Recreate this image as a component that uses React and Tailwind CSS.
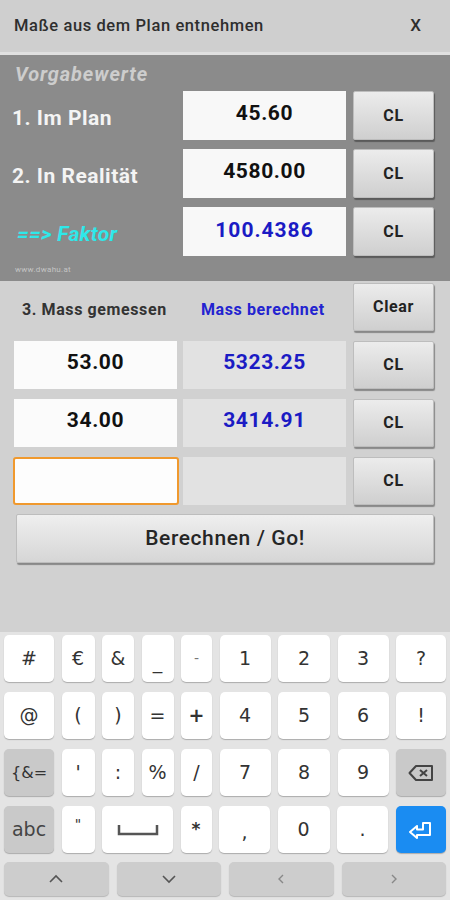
import React from "react";

const F = { fontFamily: "Roboto, 'Liberation Sans', sans-serif" };

function CLButton({ children = "CL", className = "" }) {
  return (
    <button
      className={
        "h-full w-[81px] rounded-[2px] bg-gradient-to-b from-[#ececec] to-[#cfcfcf] text-[16px] tracking-[0.6px] font-bold text-[#222] shadow-[1px_2px_1px_rgba(0,0,0,0.35)] border border-[#bdbdbd] " +
        className
      }
    >
      {children}
    </button>
  );
}

function Key({ children, className = "", dark = false }) {
  return (
    <div
      className={
        "flex items-center justify-center rounded-[5px] shadow-[0_1px_1px_rgba(0,0,0,0.25)] text-[19px] text-[#333] " +
        (dark ? "bg-[#c9c9c9] " : "bg-white ") +
        className
      }
      style={{ fontFamily: "'DejaVu Sans', Roboto, sans-serif" }}
    >
      {children}
    </div>
  );
}

export default function App() {
  return (
    <div className="w-[450px] h-[900px] overflow-hidden bg-[#d1d1d1] flex flex-col" style={F}>
      {/* Header */}
      <div className="h-[52px] bg-[#cfcfcf] flex items-center justify-between pl-[14px] pr-[29px]">
        <span className="text-[16.5px] font-medium text-[#2e2e2e] tracking-[0.6px]">Maße aus dem Plan entnehmen</span>
        <span className="text-[17px] font-medium text-[#2e2e2e]">X</span>
      </div>
      <div className="h-[3px] bg-[#e0e0e0]" />

      {/* Vorgabewerte panel */}
      <div className="h-[226px] bg-[#8b8b8b] flex flex-col pt-[4px] pr-[16px]">
        <div className="h-[30px] flex items-center pl-[15px] text-[20px] tracking-[0.9px] font-bold italic text-[#cdcdcd]">
          Vorgabewerte
        </div>
        <div className="mt-[2px] flex flex-col gap-[9px]">
          <div className="flex h-[49px] items-center">
            <div className="w-[183px] pl-[12px] pt-[7px] text-[21px] tracking-[0.5px] font-bold text-[#f4f4f4]">1. Im Plan</div>
            <div className="h-full w-[163px] bg-[#f8f8f8] flex items-center justify-center pb-[4px] text-[21px] tracking-[0.6px] font-bold text-[#111]">45.60</div>
            <div className="h-full ml-[7px]"><CLButton /></div>
          </div>
          <div className="flex h-[49px] items-center">
            <div className="w-[183px] pl-[12px] pt-[7px] text-[21px] tracking-[0.5px] font-bold text-[#f4f4f4]">2. In Realität</div>
            <div className="h-full w-[163px] bg-[#f8f8f8] flex items-center justify-center pb-[4px] text-[21px] tracking-[0.6px] font-bold text-[#111]">4580.00</div>
            <div className="h-full ml-[7px]"><CLButton /></div>
          </div>
          <div className="flex h-[49px] items-center">
            <div className="w-[183px] pl-[17px] pt-[7px] text-[21px] tracking-[0.3px] font-bold italic text-[#2ee8ea]">==&gt; Faktor</div>
            <div className="h-full w-[163px] bg-[#f8f8f8] flex items-center justify-center pb-[2px] text-[21px] tracking-[1px] font-bold text-[#1b1bc4]">100.4386</div>
            <div className="h-full ml-[7px]"><CLButton /></div>
          </div>
        </div>
        <div className="mt-[10px] pl-[15px] text-[8px] tracking-[0.3px] text-[#c4c4c4] leading-none">www.dwahu.at</div>
      </div>

      {/* Messung */}
      <div className="h-[351px] bg-[#d1d1d1] flex flex-col pt-[2px] pl-[14px] pr-[16px]">
        <div className="flex h-[48px] items-center">
          <div className="w-[169px] pl-[8px] pt-[6px] text-[16px] tracking-[0.6px] font-bold text-[#333]">3. Mass gemessen</div>
          <div className="w-[163px] pl-[18px] pt-[6px] text-[16px] tracking-[0.6px] font-bold text-[#2323d0]">Mass berechnet</div>
          <div className="h-full ml-[7px]"><CLButton>Clear</CLButton></div>
        </div>
        <div className="mt-[10px] flex flex-col gap-[10px]">
          <div className="flex h-[48px]">
            <div className="w-[163px] bg-[#fbfbfb] flex items-center justify-center pb-[4px] text-[21px] tracking-[0.6px] font-bold text-[#111]">53.00</div>
            <div className="ml-[6px] w-[163px] bg-[#e2e2e2] flex items-center justify-center pb-[4px] text-[21px] tracking-[0.6px] font-bold text-[#1b1bc4]">5323.25</div>
            <div className="h-full ml-[7px]"><CLButton /></div>
          </div>
          <div className="flex h-[48px]">
            <div className="w-[163px] bg-[#fbfbfb] flex items-center justify-center pb-[4px] text-[21px] tracking-[0.6px] font-bold text-[#111]">34.00</div>
            <div className="ml-[6px] w-[163px] bg-[#e2e2e2] flex items-center justify-center pb-[4px] text-[21px] tracking-[0.6px] font-bold text-[#1b1bc4]">3414.91</div>
            <div className="h-full ml-[7px]"><CLButton /></div>
          </div>
          <div className="flex h-[48px]">
            <div className="w-[166px] -ml-[1px] rounded-[3px] border-2 border-[#f0992e] bg-[#fdfdfd]" />
            <div className="ml-[4px] w-[163px] bg-[#e2e2e2]" />
            <div className="h-full ml-[7px]"><CLButton /></div>
          </div>
        </div>
        <button className="mt-[9px] ml-[2px] h-[49px] w-[418px] rounded-[2px] border border-[#bdbdbd] bg-gradient-to-b from-[#efefef] to-[#d6d6d6] shadow-[1px_2px_1px_rgba(0,0,0,0.35)] text-[21px] tracking-[0.6px] font-medium text-[#262626]">
          Berechnen / Go!
        </button>
      </div>

      {/* Keyboard */}
      <div className="flex-1 bg-[#e4e4e4] pt-[3px] px-[4px] flex flex-col gap-[10px]">
        <div className="grid h-[47px] grid-cols-[50px_33px_32px_32px_31px_51px_52px_51px_50px] gap-x-[7.5px]">
          <Key>#</Key>
          <Key>€</Key>
          <Key>&amp;</Key>
          <Key><span className="mt-[8px]">_</span></Key>
          <Key><span className="text-[14px] text-[#777]">-</span></Key>
          <Key>1</Key>
          <Key>2</Key>
          <Key>3</Key>
          <Key>?</Key>
        </div>
        <div className="grid h-[47px] grid-cols-[50px_33px_32px_32px_31px_51px_52px_51px_50px] gap-x-[7.5px]">
          <Key>@</Key>
          <Key>(</Key>
          <Key>)</Key>
          <Key>=</Key>
          <Key><span className="font-bold">+</span></Key>
          <Key>4</Key>
          <Key>5</Key>
          <Key>6</Key>
          <Key>!</Key>
        </div>
        <div className="grid h-[47px] grid-cols-[50px_33px_32px_32px_31px_51px_52px_51px_50px] gap-x-[7.5px]">
          <Key dark><span className="text-[16px]">{"{&="}</span></Key>
          <Key>'</Key>
          <Key>:</Key>
          <Key>%</Key>
          <Key>/</Key>
          <Key>7</Key>
          <Key>8</Key>
          <Key>9</Key>
          <Key dark>
            <svg width="26" height="18" viewBox="0 0 26 18" fill="none" stroke="#444" strokeWidth="2" strokeLinejoin="round">
              <path d="M8 2 H24 V16 H8 L1.5 9 Z" />
              <path d="M12 6 L19 12 M19 6 L12 12" />
            </svg>
          </Key>
        </div>
        <div className="grid h-[47px] grid-cols-[50px_33px_71px_31px_51px_52px_51px_50px] gap-x-[7.5px]">
          <Key dark><span className="text-[19px] text-[#444]">abc</span></Key>
          <Key><span className="-mt-[10px] text-[14px]">"</span></Key>
          <Key>
            <svg width="42" height="12" viewBox="0 0 42 12" fill="none" stroke="#555" strokeWidth="2.5">
              <path d="M2 1 V10 H40 V1" />
            </svg>
          </Key>
          <Key><span className="text-[17px] font-bold">*</span></Key>
          <Key><span className="mt-[6px]">,</span></Key>
          <Key>0</Key>
          <Key>.</Key>
          <div className="flex items-center justify-center rounded-[5px] bg-[#1a8cf2] shadow-[0_1px_1px_rgba(0,0,0,0.25)]">
            <svg width="26" height="20" viewBox="0 0 26 20" fill="none" stroke="white" strokeWidth="2" strokeLinejoin="round">
              <path d="M2 12 L9 6 V9.5 H15 V3 H22 V15 H9 V18 Z" />
            </svg>
          </div>
        </div>
        <div className="grid h-[34px] grid-cols-4 gap-x-[8px] -mt-[1px]">
          <div className="flex items-center justify-center rounded-[5px] bg-[#cdcdcd] shadow-[0_1px_1px_rgba(0,0,0,0.2)]">
            <svg width="16" height="10" viewBox="0 0 16 10" fill="none" stroke="#555" strokeWidth="1.6"><path d="M2 8 L8 2 L14 8" /></svg>
          </div>
          <div className="flex items-center justify-center rounded-[5px] bg-[#cdcdcd] shadow-[0_1px_1px_rgba(0,0,0,0.2)]">
            <svg width="16" height="10" viewBox="0 0 16 10" fill="none" stroke="#555" strokeWidth="1.6"><path d="M2 2 L8 8 L14 2" /></svg>
          </div>
          <div className="flex items-center justify-center rounded-[5px] bg-[#cdcdcd] shadow-[0_1px_1px_rgba(0,0,0,0.2)]">
            <svg width="8" height="12" viewBox="0 0 8 12" fill="none" stroke="#888" strokeWidth="1.4"><path d="M6 2 L2 6 L6 10" /></svg>
          </div>
          <div className="flex items-center justify-center rounded-[5px] bg-[#cdcdcd] shadow-[0_1px_1px_rgba(0,0,0,0.2)]">
            <svg width="8" height="12" viewBox="0 0 8 12" fill="none" stroke="#888" strokeWidth="1.4"><path d="M2 2 L6 6 L2 10" /></svg>
          </div>
        </div>
      </div>
    </div>
  );
}
